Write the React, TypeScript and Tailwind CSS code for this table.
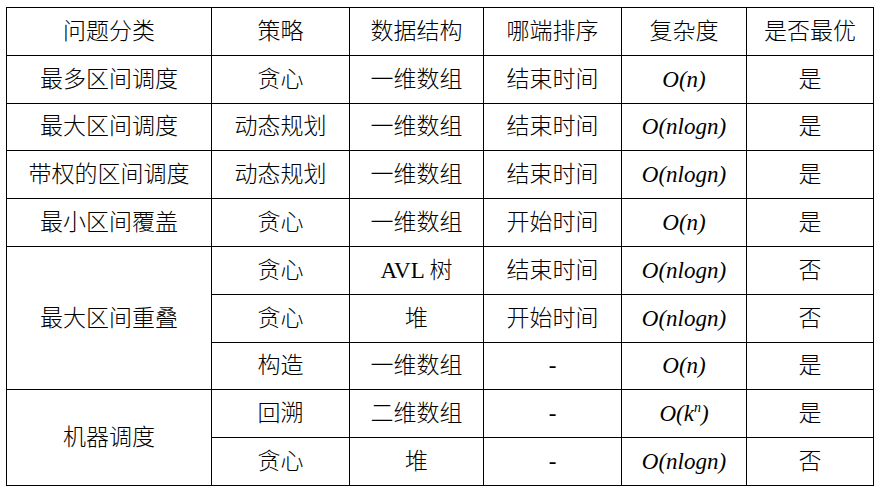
import React from "react";

const cell = "border border-black text-center align-middle p-0 font-light";

function O({ children }: { children: React.ReactNode }) {
  return <span className="italic font-normal">{children}</span>;
}

const nlogn = <O>O(nlogn)</O>;
const on = <O>O(n)</O>;

export default function App() {
  return (
    <div className="w-[889px] h-[489px] bg-white pl-[6px] pt-[7px]">
      <table
        className="border-collapse text-black text-[23px] leading-none"
        style={{ fontFamily: '"Liberation Serif", "Noto Sans CJK SC", serif' }}
      >
        <colgroup>
          <col className="w-[205px]" />
          <col className="w-[138px]" />
          <col className="w-[134px]" />
          <col className="w-[138px]" />
          <col className="w-[125px]" />
          <col className="w-[127px]" />
        </colgroup>
        <tbody>
          <tr className="h-[47.8px]">
            <td className={cell}>问题分类</td>
            <td className={cell}>策略</td>
            <td className={cell}>数据结构</td>
            <td className={cell}>哪端排序</td>
            <td className={cell}>复杂度</td>
            <td className={cell}>是否最优</td>
          </tr>
          <tr className="h-[47.8px]">
            <td className={cell}>最多区间调度</td>
            <td className={cell}>贪心</td>
            <td className={cell}>一维数组</td>
            <td className={cell}>结束时间</td>
            <td className={cell}>{on}</td>
            <td className={cell}>是</td>
          </tr>
          <tr className="h-[47.8px]">
            <td className={cell}>最大区间调度</td>
            <td className={cell}>动态规划</td>
            <td className={cell}>一维数组</td>
            <td className={cell}>结束时间</td>
            <td className={cell}>{nlogn}</td>
            <td className={cell}>是</td>
          </tr>
          <tr className="h-[47.8px]">
            <td className={cell}>带权的区间调度</td>
            <td className={cell}>动态规划</td>
            <td className={cell}>一维数组</td>
            <td className={cell}>结束时间</td>
            <td className={cell}>{nlogn}</td>
            <td className={cell}>是</td>
          </tr>
          <tr className="h-[47.8px]">
            <td className={cell}>最小区间覆盖</td>
            <td className={cell}>贪心</td>
            <td className={cell}>一维数组</td>
            <td className={cell}>开始时间</td>
            <td className={cell}>{on}</td>
            <td className={cell}>是</td>
          </tr>
          <tr className="h-[47.8px]">
            <td className={cell} rowSpan={3}>最大区间重叠</td>
            <td className={cell}>贪心</td>
            <td className={cell}>AVL 树</td>
            <td className={cell}>结束时间</td>
            <td className={cell}>{nlogn}</td>
            <td className={cell}>否</td>
          </tr>
          <tr className="h-[47.8px]">
            <td className={cell}>贪心</td>
            <td className={cell}>堆</td>
            <td className={cell}>开始时间</td>
            <td className={cell}>{nlogn}</td>
            <td className={cell}>否</td>
          </tr>
          <tr className="h-[47.8px]">
            <td className={cell}>构造</td>
            <td className={cell}>一维数组</td>
            <td className={cell}>-</td>
            <td className={cell}>{on}</td>
            <td className={cell}>是</td>
          </tr>
          <tr className="h-[47.8px]">
            <td className={cell} rowSpan={2}>机器调度</td>
            <td className={cell}>回溯</td>
            <td className={cell}>二维数组</td>
            <td className={cell}>-</td>
            <td className={cell}>
              <O>
                O(k<span className="text-[14px] relative -top-[9px]">n</span>)
              </O>
            </td>
            <td className={cell}>是</td>
          </tr>
          <tr className="h-[47.8px]">
            <td className={cell}>贪心</td>
            <td className={cell}>堆</td>
            <td className={cell}>-</td>
            <td className={cell}>{nlogn}</td>
            <td className={cell}>否</td>
          </tr>
        </tbody>
      </table>
    </div>
  );
}
